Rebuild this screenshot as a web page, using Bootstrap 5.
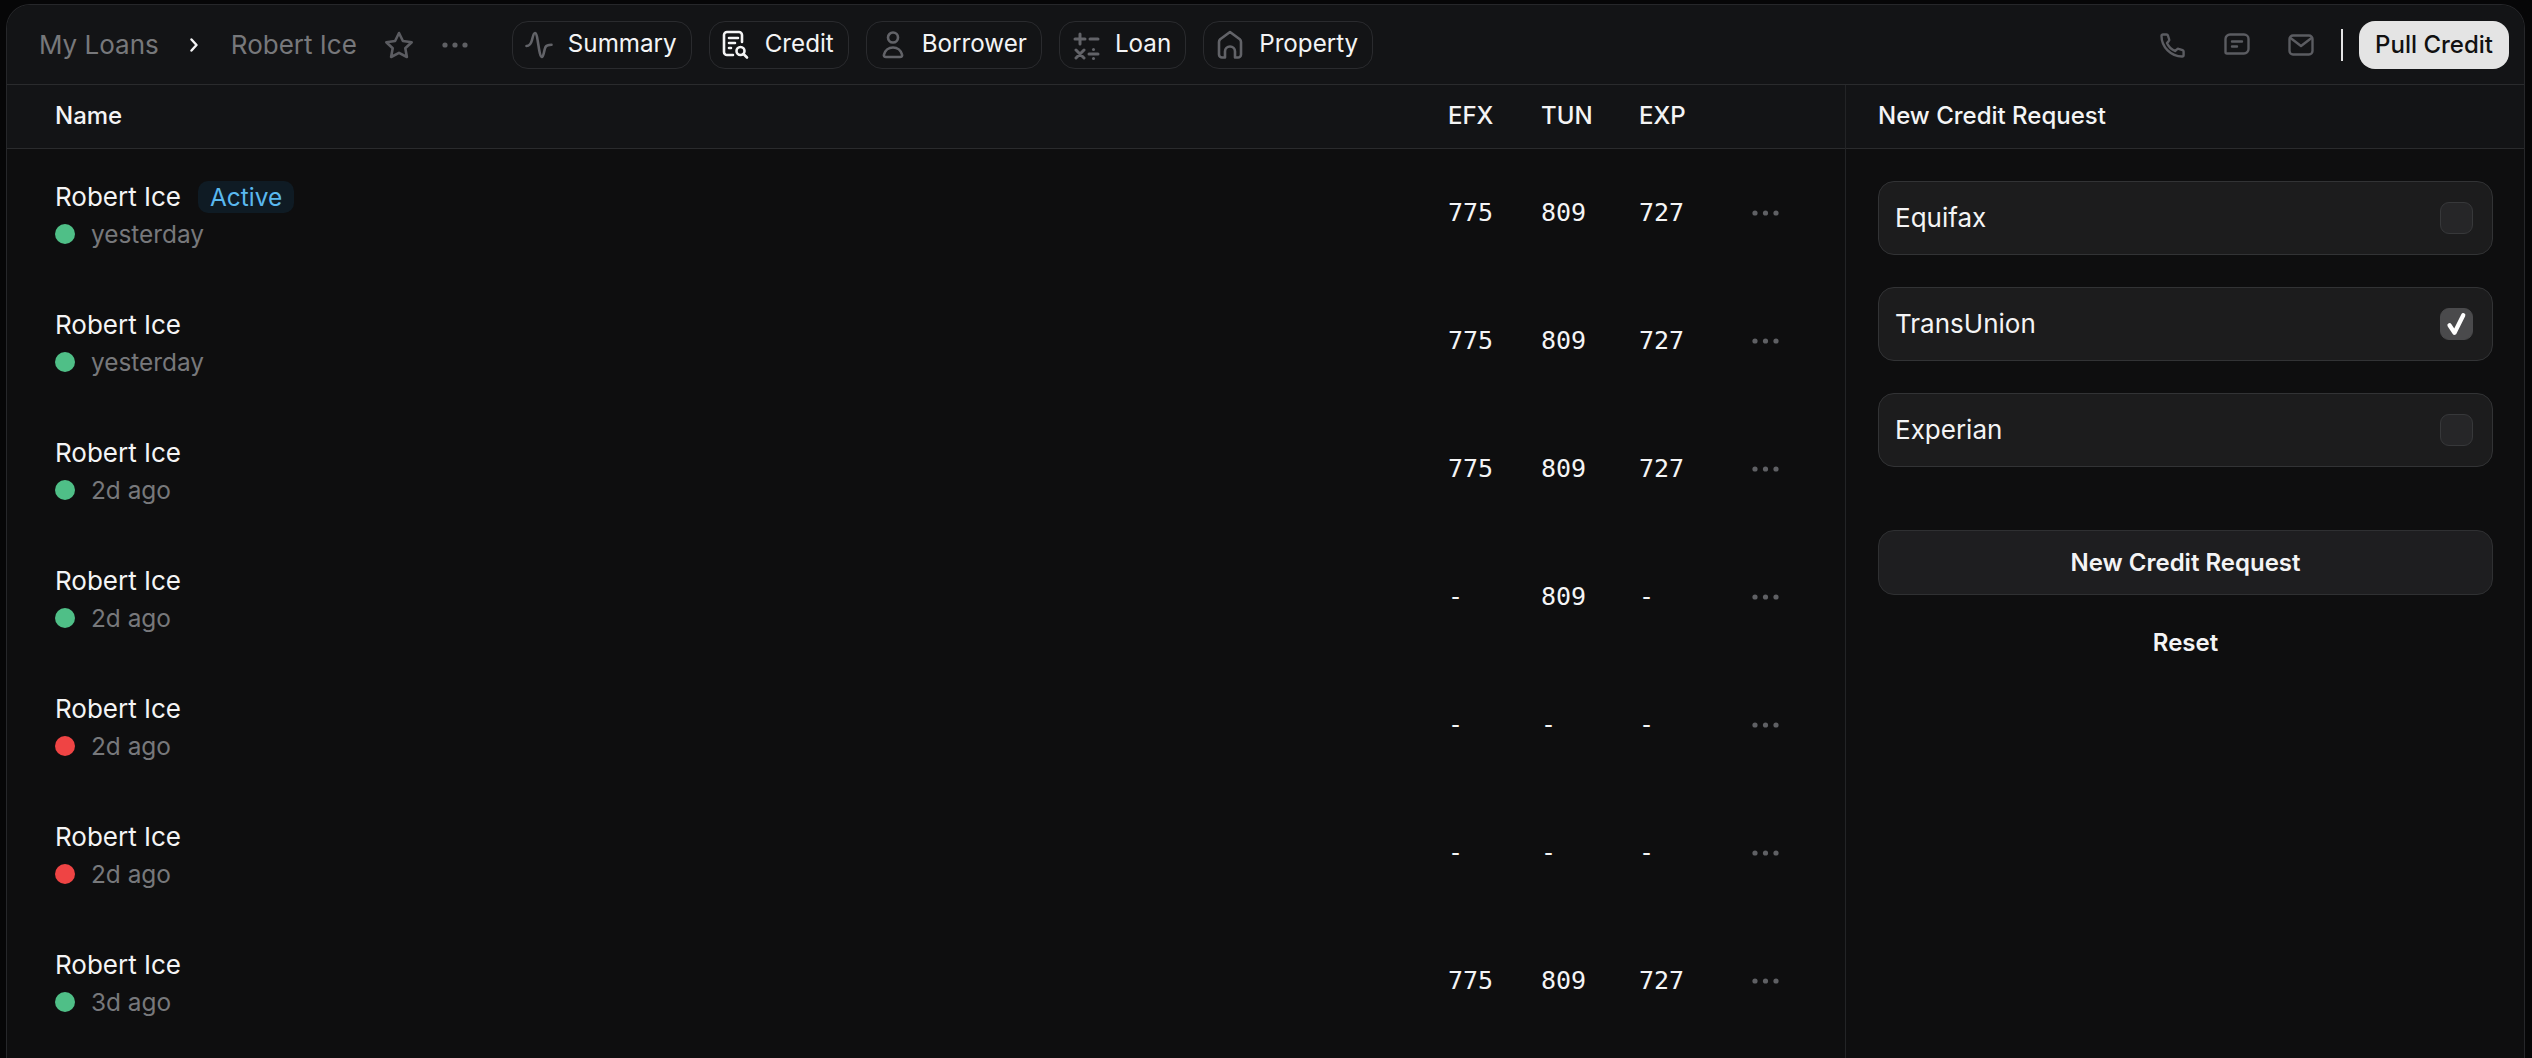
<!DOCTYPE html>
<html lang="en">
<head>
  <meta charset="UTF-8" />
  <title>Robert Ice - Credit</title>
  <link href="https://cdn.jsdelivr.net/npm/bootstrap@5.3.0/dist/css/bootstrap.min.css" rel="stylesheet"/>
  <style>
    html, body { height: 100%; }
    body {
      background-color: #060607;
      color: #f4f4f5;
      font-family: Inter, "Liberation Sans", sans-serif;
      font-size: 26px;
      padding: 4px 7px 0 6px;
      overflow: hidden;
    }
    svg { display: block; flex: none; }
    .shell {
      height: 100%;
      border: 1px solid #26272a;
      border-bottom: 0;
      border-radius: 24px 24px 0 0;
      background-color: #0e0e0f;
      overflow: hidden;
    }
    .topbar {
      height: 80px;
      background-color: #131416;
      border-bottom: 1px solid #2a2b2d;
      padding: 0 15px 0 32px;
    }
    .crumb { color: #77787b; }
    .crumb-sep { color: #f4f4f5; margin: 0 33px 0 31px; }
    .star { margin: 0 28px 0 27px; color: #5b5c61; }
    .more { color: #5f6064; }
    .pills { margin-left: 44px; gap: 17px; }
    .pill {
      height: 48px;
      padding: 0 14px 0 12px;
      gap: 15px;
      color: #f4f4f5;
      font-size: 24.2px;
      line-height: 1;
      background: transparent;
      border: 1px solid #2a2b2e;
      border-radius: 16px;
    }
    .pill svg { color: #626368; }
    .pill.on svg { color: #f4f4f5; }
    .contact { gap: 38px; color: #5b5c61; }
    .vrule { width: 2px; height: 32px; background-color: #e4e4e4; margin: 0 16px 0 27px; }
    .pull {
      height: 48px;
      width: 150px;
      padding: 0;
      color: #111;
      font-size: 24px;
      font-weight: 500;
      background-color: #e4e4e4;
      border: 0;
      border-radius: 16px;
    }
    .list-col { flex: 1 1 0; min-width: 0; }
    .side-col { width: 679px; flex: none; border-left: 1px solid #232426; }
    .head-row {
      height: 64px;
      padding-bottom: 2px;
      background-color: #131416;
      border-bottom: 1px solid #2a2b2d;
      font-size: 24px;
      font-weight: 500;
    }
    .list-col .head-row, .loan-row { padding-left: 48px; }
    .side-col .head-row { padding-left: 32px; }
    .loan-row { height: 128px; }
    .who { flex: 1 1 0; padding-top: 5px; line-height: 38px; }
    .sub-line { margin-top: -1px; }
    .state { background-color: #0f1b24; color: #5ab8ee; font-size: 24.4px; height: 32px; line-height: 32px; padding: 0 12px; border-radius: 10px; margin-left: 17px; }
    .dot { width: 20px; height: 20px; border-radius: 50%; margin-right: 16px; }
    .dot-ok { background-color: #4fbf87; }
    .dot-bad { background-color: #ef4444; }
    .when { color: #77787b; font-size: 24.4px; }
    .c1 { width: 93px; }
    .c2 { width: 98px; }
    .c3 { width: 113px; }
    .c4 { width: 93px; }
    .score { font-family: "DejaVu Sans Mono", "Liberation Mono", monospace; font-size: 25px; }
    .side-body { padding: 32px 31px 32px 32px; }
    .bureau {
      height: 74px;
      margin-bottom: 32px;
      padding: 0 19px 2px 16px;
      background-color: #1c1c1d;
      border: 1px solid #323335;
      border-radius: 16px;
    }
    .bureau .form-check-input {
      width: 33px;
      height: 32px;
      margin: 2px 0 0;
      background-color: #262628;
      border: 1px solid #37383a;
      border-radius: 9px;
    }
    .bureau .form-check-input:checked {
      background-color: #4a4a4c;
      border-color: #4a4a4c;
      background-size: 30px;
      background-image: url("data:image/svg+xml,%3csvg xmlns='http://www.w3.org/2000/svg' viewBox='0 0 24 24'%3e%3cpath fill='none' stroke='%23fff' stroke-width='3.4' stroke-linecap='round' stroke-linejoin='round' d='M6 13l4 6L17 5'/%3e%3c/svg%3e");
    }
    .request {
      height: 65px;
      margin-top: 31px;
      color: #f4f4f5;
      font-size: 24px;
      font-weight: 600;
      background-color: #1e1e20;
      border: 1px solid #2f3032;
      border-radius: 16px;
    }
    .reset { margin-top: 30px; font-size: 24px; font-weight: 600; text-align: center; color: #f4f4f5; }
  </style>
</head>
<body>
  <div class="shell d-flex flex-column">
    <div class="topbar d-flex align-items-center flex-shrink-0">
      <span class="crumb">My Loans</span>
      <svg class="crumb-sep" width="8" height="14" viewBox="0 0 8 14" fill="none" stroke="currentColor" stroke-width="2.4" stroke-linecap="round" stroke-linejoin="round"><path d="M1.5 1.5L6.5 7l-5 5.5"/></svg>
      <span class="crumb">Robert Ice</span>
      <svg class="star" width="30" height="28" viewBox="0 0 30 28" fill="none" stroke="currentColor" stroke-width="2.6" stroke-linejoin="round"><path d="M15 2l3.9 8 8.8 1.2-6.4 6.1 1.6 8.7L15 21.8 7.1 26l1.6-8.7-6.4-6.1L11.1 10z"/></svg>
      <svg class="more" width="26" height="6" viewBox="0 0 26 6" fill="currentColor"><circle cx="3" cy="3" r="2.6"/><circle cx="13" cy="3" r="2.6"/><circle cx="23" cy="3" r="2.6"/></svg>

      <div class="pills d-flex">
        <button class="btn pill d-flex align-items-center">
          <svg width="28" height="28" viewBox="0 0 28 28" fill="none" stroke="currentColor" stroke-width="2.6" stroke-linecap="round"><path d="M1.500 15c3 0 4.500-2 5.500-6s1.500-7 3-7 2.300 5 3.300 11.500S15.300 26 17 26s2-7 3.500-10c1-1.700 3.500-2.200 6-2.200"/></svg>
          Summary
        </button>
        <button class="btn pill on d-flex align-items-center">
          <svg width="28" height="30" viewBox="0 0 28 30" fill="none" stroke="currentColor" stroke-width="2.6" stroke-linecap="round" stroke-linejoin="round"><path d="M11 25H5a3 3 0 0 1-3-3V5a3 3 0 0 1 3-3h12a3 3 0 0 1 3 3v7"/><path d="M7 8h9M7 13h6M7 18h2"/><circle cx="18.500" cy="21" r="4"/><path d="M21.500 24l3.500 3.500"/></svg>
          Credit
        </button>
        <button class="btn pill d-flex align-items-center">
          <svg width="28" height="30" viewBox="0 0 28 30" fill="none" stroke="currentColor" stroke-width="2.600"><circle cx="14" cy="7.500" r="5"/><path d="M7 27c-1.500 0-2.500-1-2-2.500C6 20.500 9.500 17.500 14 17.500s8 3 9 7c.5 1.500-.5 2.500-2 2.500z" stroke-linejoin="round"/></svg>
          Borrower
        </button>
        <button class="btn pill d-flex align-items-center">
          <svg width="28" height="30" viewBox="0 0 28 30" fill="none" stroke="currentColor" stroke-width="3" stroke-linecap="round"><path d="M8 4v10M3 9h10M18 9h8M4 20l8 8M12 20l-8 8M17 24h9"/><circle cx="21.500" cy="19.500" r="1.500" fill="currentColor" stroke="none"/><circle cx="21.500" cy="28.500" r="1.500" fill="currentColor" stroke="none"/></svg>
          Loan
        </button>
        <button class="btn pill d-flex align-items-center">
          <svg width="28" height="30" viewBox="0 0 28 30" fill="none" stroke="currentColor" stroke-width="2.600" stroke-linejoin="round" stroke-linecap="round"><path d="M9 27.500H6a3 3 0 0 1-3-3V12a4 4 0 0 1 1.200-2.800L14 2l9.800 7.200A4 4 0 0 1 25 12v12.500a3 3 0 0 1-3 3h-3v-6a5 5 0 0 0-10 0z"/></svg>
          Property
        </button>
      </div>

      <div class="contact d-flex align-items-center ms-auto">
        <svg width="26" height="26" viewBox="0 0 26 26" fill="none" stroke="currentColor" stroke-width="2.400" stroke-linejoin="round"><path d="M3 2.500h3.500a1.500 1.500 0 0 1 1.400 1l1.300 4a1.500 1.500 0 0 1-.5 1.600L7 11c1.500 3.500 4.500 6.500 8 8l2-1.700a1.500 1.500 0 0 1 1.600-.4l4 1.300a1.500 1.500 0 0 1 1 1.400V23a1.500 1.500 0 0 1-1.500 1.500C11 24.500 1.500 15 1.500 4A1.500 1.500 0 0 1 3 2.500z"/></svg>
        <svg width="26" height="24" viewBox="0 0 26 24" fill="none" stroke="currentColor" stroke-width="2.400" stroke-linecap="round" stroke-linejoin="round"><path d="M6 1.500h14a4.500 4.500 0 0 1 4.500 4.500v10a4.500 4.500 0 0 1-4.500 4.500H3a1.500 1.500 0 0 1-1.500-1.500V6A4.500 4.500 0 0 1 6 1.500z"/><path d="M8 8.500h10M8 13.500h5"/></svg>
        <svg width="26" height="22" viewBox="0 0 26 22" fill="none" stroke="currentColor" stroke-width="2.400" stroke-linecap="round" stroke-linejoin="round"><rect x="1.500" y="1.500" width="23" height="19" rx="3.500"/><path d="M2.500 4L13 12 23.500 4"/></svg>
      </div>
      <div class="vrule"></div>
      <button class="btn pull">Pull Credit</button>
    </div>

    <div class="d-flex flex-grow-1">
      <div class="list-col">
        <div class="head-row d-flex align-items-center">
          <div class="flex-grow-1">Name</div>
          <div class="c1">EFX</div>
          <div class="c2">TUN</div>
          <div class="c3">EXP</div>
          <div class="c4"></div>
        </div>
        <div id="loanRows"></div>
      </div>

      <div class="side-col">
        <div class="head-row d-flex align-items-center">New Credit Request</div>
        <div class="side-body">
          <label class="bureau d-flex align-items-center justify-content-between">Equifax <input class="form-check-input" type="checkbox" /></label>
          <label class="bureau d-flex align-items-center justify-content-between">TransUnion <input class="form-check-input" type="checkbox" checked /></label>
          <label class="bureau d-flex align-items-center justify-content-between">Experian <input class="form-check-input" type="checkbox" /></label>
          <button class="btn request w-100">New Credit Request</button>
          <div class="reset">Reset</div>
        </div>
      </div>
    </div>
  </div>

  <script src="https://cdn.jsdelivr.net/npm/bootstrap@5.3.0/dist/js/bootstrap.bundle.min.js"></script>
  <script>
    const rows = [
      { when: 'yesterday', ok: true, active: true, s: ['775', '809', '727'] },
      { when: 'yesterday', ok: true, s: ['775', '809', '727'] },
      { when: '2d ago', ok: true, s: ['775', '809', '727'] },
      { when: '2d ago', ok: true, s: ['-', '809', '-'] },
      { when: '2d ago', ok: false, s: ['-', '-', '-'] },
      { when: '2d ago', ok: false, s: ['-', '-', '-'] },
      { when: '3d ago', ok: true, s: ['775', '809', '727'] }
    ];

    const dots = '<svg width="27" height="6" viewBox="0 0 27 6" fill="#5f6064"><circle cx="3" cy="3" r="2.600"/><circle cx="13.500" cy="3" r="2.600"/><circle cx="24" cy="3" r="2.600"/></svg>';

    document.getElementById('loanRows').innerHTML = rows.map(r => `
      <div class="loan-row d-flex align-items-center">
        <div class="who">
          <div class="d-flex align-items-center">Robert Ice${r.active ? '<span class="state">Active</span>' : ''}</div>
          <div class="sub-line d-flex align-items-center"><span class="dot ${r.ok ? 'dot-ok' : 'dot-bad'}"></span><span class="when">${r.when}</span></div>
        </div>
        <div class="c1 score">${r.s[0]}</div>
        <div class="c2 score">${r.s[1]}</div>
        <div class="c3 score">${r.s[2]}</div>
        <div class="c4">${dots}</div>
      </div>`).join('');
  </script>
</body>
</html>
